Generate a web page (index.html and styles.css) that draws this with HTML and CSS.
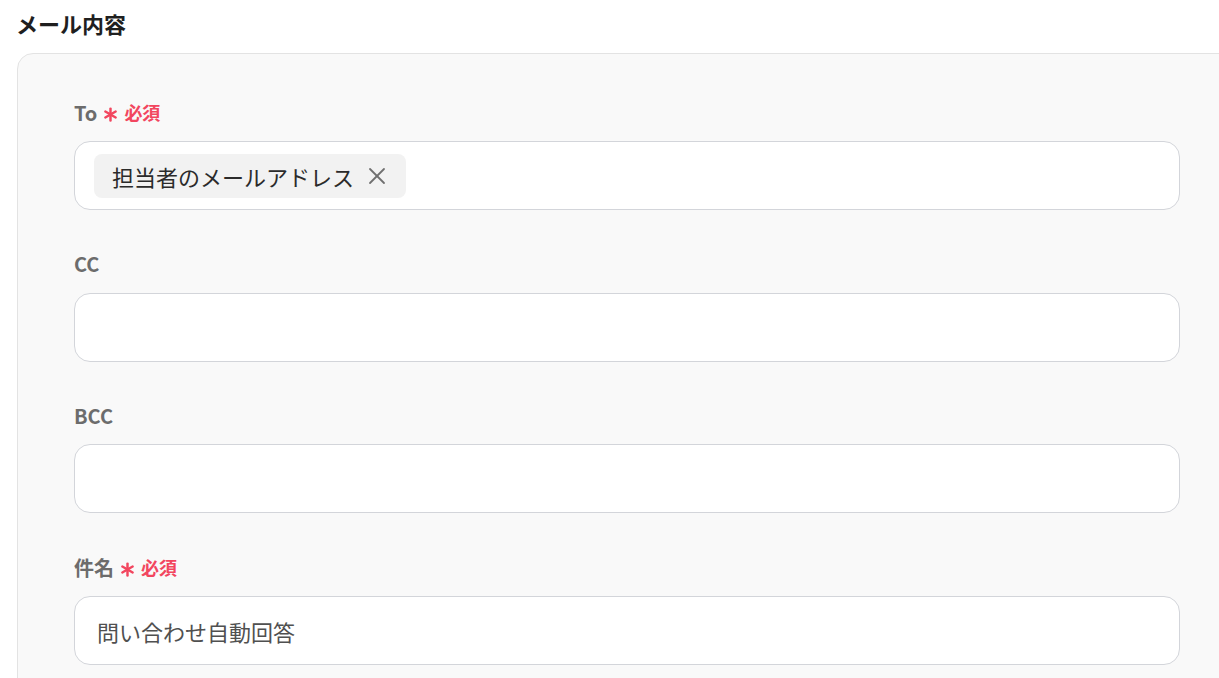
FILE: index.html
```html
<!DOCTYPE html>
<html lang="ja">
<head>
<meta charset="utf-8">
<title>メール内容</title>
<link rel="stylesheet" href="styles.css">
</head>
<body>
<div class="page">
  <h2 class="title">メール内容</h2>
  <div class="card">
    <div class="field">
      <div class="label">To<span class="req"><svg class="ast" viewBox="0 0 14 14" width="15" height="15"><g stroke="currentColor" stroke-width="2.3" stroke-linecap="round"><line x1="7" y1="1.5" x2="7" y2="12.5"/><line x1="2.2" y1="4.2" x2="11.8" y2="9.8"/><line x1="2.2" y1="9.8" x2="11.8" y2="4.2"/></g></svg>必須</span></div>
      <div class="input chips">
        <span class="chip">担当者のメールアドレス<svg class="x" viewBox="0 0 18 18" width="18" height="18"><g stroke="currentColor" stroke-width="1.8" stroke-linecap="round"><line x1="2" y1="2" x2="16" y2="16"/><line x1="16" y1="2" x2="2" y2="16"/></g></svg></span>
      </div>
    </div>
    <div class="field">
      <div class="label">CC</div>
      <div class="input"></div>
    </div>
    <div class="field">
      <div class="label">BCC</div>
      <div class="input"></div>
    </div>
    <div class="field">
      <div class="label">件名<span class="req"><svg class="ast" viewBox="0 0 14 14" width="15" height="15"><g stroke="currentColor" stroke-width="2.3" stroke-linecap="round"><line x1="7" y1="1.5" x2="7" y2="12.5"/><line x1="2.2" y1="4.2" x2="11.8" y2="9.8"/><line x1="2.2" y1="9.8" x2="11.8" y2="4.2"/></g></svg>必須</span></div>
      <div class="input text">問い合わせ自動回答</div>
    </div>
  </div>
</div>
</body>
</html>
```
FILE: styles.css
```css
html, body {
  margin: 0;
  padding: 0;
  background: #ffffff;
}
body {
  width: 1219px;
  height: 678px;
  overflow: hidden;
  font-family: "Noto Sans CJK JP", sans-serif;
}
.page {
  padding: 8px 0 0 16px;
  overflow: hidden;
}
.title {
  margin: 0 0 15px 0;
  font-size: 22px;
  line-height: 30px;
  font-weight: 700;
  color: #1f1f1f;
}
.card {
  box-sizing: border-box;
  width: 1221px;
  margin-left: 1px;
  background: #f9f9f9;
  border: 1px solid #e3e3e3;
  border-radius: 16px;
  padding: 45px 57px 60px 56px;
  display: flex;
  flex-direction: column;
  gap: 40.7px;
}
.field {
  display: flex;
  flex-direction: column;
}
.label {
  display: flex;
  align-items: center;
  height: 26px;
  margin-bottom: 16px;
  font-size: 20px;
  font-weight: 700;
  color: #6c6c6c;
}
.req {
  display: inline-flex;
  align-items: center;
  margin-left: 6px;
  color: #f2465f;
  font-size: 18px;
  font-weight: 700;
}
.ast {
  margin-right: 6px;
  margin-top: 5px;
}
.input {
  box-sizing: border-box;
  height: 69px;
  background: #ffffff;
  border: 1px solid #d3d5da;
  border-radius: 16px;
  display: flex;
  align-items: center;
}
.chips {
  padding: 0 19px;
}
.chip {
  display: inline-flex;
  align-items: center;
  height: 44px;
  padding: 0 20px 0 18px;
  background: #f2f2f2;
  border-radius: 8px;
  font-size: 22px;
  color: #2b2b2b;
}
.x {
  margin-left: 14px;
  color: #6f6f6f;
}
.text {
  padding: 0 22px;
  font-size: 22px;
  color: #505050;
}
```
